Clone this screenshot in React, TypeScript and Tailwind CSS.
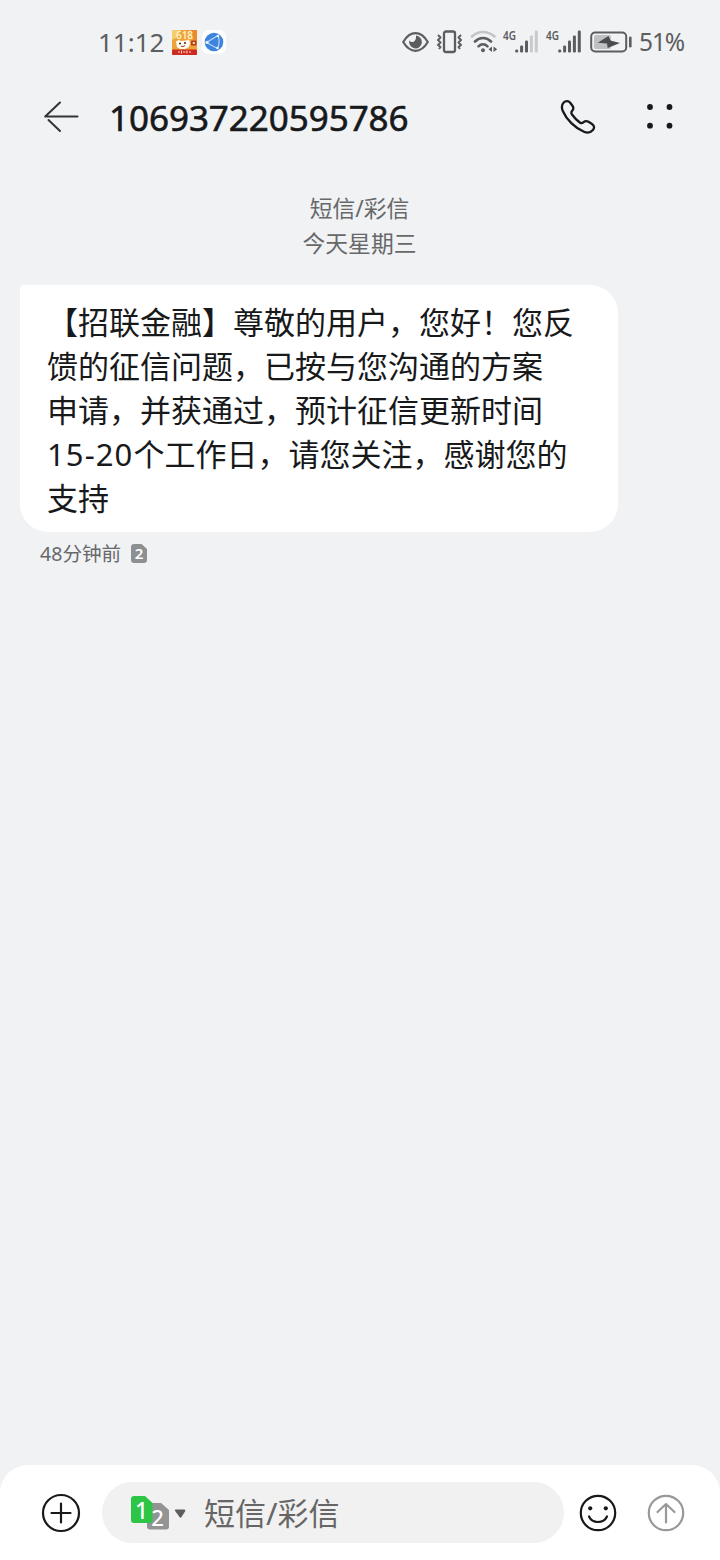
import type { ReactNode } from "react";

type Message = {
  id: number;
  lines: string[];
  time: string;
  sim: string;
};

const MESSAGES: Message[] = [
  {
    id: 1,
    lines: [
      "【招联金融】尊敬的用户，您好！您反",
      "馈的征信问题，已按与您沟通的方案",
      "申请，并获通过，预计征信更新时间",
      "15-20个工作日，请您关注，感谢您的",
      "支持",
    ],
    time: "48分钟前",
    sim: "2",
  },
];

const FONT = "font-['Noto_Sans','Noto_Sans_CJK_SC',sans-serif]";
const CONDENSED = "font-['Noto_Sans','Liberation_Sans',sans-serif]";

function SaleAppIcon() {
  return (
    <svg width="25" height="33" viewBox="0 -4 25 33">
      <rect width="25" height="25" rx="1" fill="#eda33a" />
      <path d="M0 0H9L4 8L0 10Z" fill="#f5cd6d" />
      <path d="M19 0H25V12L21 9Z" fill="#e98b2e" />
      <text
        x="12.500"
        y="9"
        textAnchor="middle"
        fontSize="10"
        fontWeight="600"
        fill="#fff3c4"
        className={CONDENSED}
      >
        618
      </text>
      <path
        d="M4 11.500L6.500 10L9 11L14 10.500L17 9.500L18 13L17 17L13 19H8L5 17Z"
        fill="#fffdf5"
      />
      <circle cx="8" cy="13.500" r="1" fill="#4a2413" />
      <circle cx="13" cy="13" r="1" fill="#4a2413" />
      <path d="M9 16Q11 17.500 13 15.500" stroke="#a3301c" fill="none" />
      <rect x="19" y="10.500" width="5.500" height="5" rx="1" fill="#b43a1b" />
      <rect x="20.800" y="12" width="2" height="2" fill="#ffe7a8" />
      <rect y="19.500" width="25" height="5.500" rx="1" fill="#cf2a22" />
      <path d="M6 22H8M9.500 20.500V23.500M11 22H13.500M15 20.500V23.500M17 22H19" stroke="#ffd9c2" />
    </svg>
  );
}

function BrowserAppIcon() {
  return (
    <svg width="24" height="24" viewBox="0 0 24 24">
      <rect width="24" height="24" rx="7" fill="#fff" />
      <circle cx="12" cy="12" r="9.300" fill="#3d84df" />
      <path
        d="M4.500 12.500L16 5.500Q18.500 12 15.500 18.500L4.500 12.500"
        fill="none"
        stroke="#b9d6f7"
        strokeWidth="1.200"
      />
      <circle cx="5" cy="12.300" r="1.600" fill="#e8f2fd" />
      <circle cx="16" cy="6" r="1.300" fill="#e8f2fd" />
      <circle cx="15.500" cy="18" r="1.300" fill="#e8f2fd" />
    </svg>
  );
}

function EyeIcon() {
  return (
    <svg width="27" height="22" viewBox="0 0 27 22">
      <path
        d="M1.200 11Q6.500 2.200 13.500 2.200T25.800 11Q20.500 19.800 13.500 19.800T1.200 11Z"
        fill="none"
        stroke="#5c5d5f"
        strokeWidth="2.200"
        strokeLinejoin="round"
      />
      <path
        d="M14 4.600A6.400 6.400 0 1 1 7.300 9.500Q8.800 11.500 11.200 11Q14.500 9.500 14 4.600Z"
        fill="#5c5d5f"
      />
    </svg>
  );
}

function VibrateIcon() {
  return (
    <svg
      width="27"
      height="24"
      viewBox="0 0 27 24"
      fill="none"
      stroke="#5c5d5f"
      strokeWidth="2"
      strokeLinejoin="round"
    >
      <rect x="8" y="1.500" width="11" height="20.500" rx="2" strokeWidth="2.300" />
      <path d="M2 5L4.500 7.500L2 10L4.500 12.500L2 15L4.500 17L3 19" />
      <path d="M25 5L22.500 7.500L25 10L22.500 12.500L25 15L22.500 17L24 19" />
    </svg>
  );
}

function WifiIcon() {
  return (
    <svg width="28" height="24" viewBox="0 0 28 24" fill="none" strokeLinecap="round">
      <path d="M2 6.500Q7 2 13 2T24.500 6.500" stroke="#c3c4c6" strokeWidth="2.700" />
      <path d="M5 11.500Q8.500 8 13 8T21 11.500" stroke="#5c5d5f" strokeWidth="2.700" />
      <path d="M8.500 16.300Q10.500 14.300 13 14.300T17.500 16.300" stroke="#5c5d5f" strokeWidth="2.600" />
      <circle cx="13" cy="20.300" r="2" fill="#5c5d5f" />
      <path d="M22 16.500V22L18.500 19.200ZM23.500 16.500V22L27.200 19.200Z" fill="#5c5d5f" />
    </svg>
  );
}

function SignalIcon({ strength }: { strength: number }) {
  const bars = [3, 7, 12, 17, 22];
  return (
    <svg width="35" height="34" viewBox="0 -5 35 34">
      <text
        x="0"
        y="9.500"
        fontSize="13"
        fontWeight="600"
        fill="#5c5d5f"
        textLength="13"
        lengthAdjust="spacingAndGlyphs"
        className={CONDENSED}
      >
        4G
      </text>
      {bars.map((height, index) => (
        <rect
          key={height}
          x={12.2 + index * 4.9}
          y={22.5 - height}
          width="3"
          height={height}
          rx="1.200"
          fill={index < strength ? "#5c5d5f" : "#c9cacc"}
        />
      ))}
    </svg>
  );
}

function BatteryIcon() {
  return (
    <svg width="42" height="24" viewBox="0 0 42 24">
      <rect x="4" y="5" width="17" height="14" rx="2" fill="#bfc0c2" />
      <rect x="1.200" y="2.500" width="35" height="19" rx="4" fill="none" stroke="#5c5d5f" strokeWidth="2" />
      <path d="M7.700 12.800L18.500 6L20.500 10.500L30 13L17.700 18L17 13.500Z" fill="#4b4c4e" />
      <rect x="39" y="6.500" width="2.600" height="11" rx="1.300" fill="#5c5d5f" />
    </svg>
  );
}

function StatusBar() {
  return (
    <div className="flex h-[84px] items-center pr-[35px] pl-[98px] text-[#5c5d5f]">
      <span className="w-[74px] text-[26px] leading-none">11:12</span>
      <div className="flex items-center gap-[5px]">
        <SaleAppIcon />
        <BrowserAppIcon />
      </div>
      <div className="ml-auto flex items-center">
        <EyeIcon />
        <span className="ml-[7px]">
          <VibrateIcon />
        </span>
        <span className="ml-[7px]">
          <WifiIcon />
        </span>
        <span className="ml-[5px]">
          <SignalIcon strength={3} />
        </span>
        <span className="ml-2">
          <SignalIcon strength={5} />
        </span>
        <span className="ml-[9px]">
          <BatteryIcon />
        </span>
        <span className="ml-[7px] w-[46px] pt-px text-[24.500px] leading-none tracking-[-1.1px]">51%</span>
      </div>
    </div>
  );
}

function IconButton({ label, children }: { label: string; children: ReactNode }) {
  return (
    <button type="button" aria-label={label} className="shrink-0">
      {children}
    </button>
  );
}

function Header() {
  return (
    <header className="flex h-[66px] items-center pr-[46px] pl-[43px] text-[#18191b]">
      <IconButton label="返回">
        <svg width="36" height="36" viewBox="0 0 36 36" fill="none" stroke="#333436" strokeWidth="2" strokeLinecap="round">
          <path d="M17 3.500L2.200 17.500H34.500M5.500 21L17 32" strokeLinejoin="round" />
        </svg>
      </IconButton>
      <h1 className="ml-[30px] text-[35px] leading-none font-normal tracking-[-0.05px] [-webkit-text-stroke:0.6px_#18191b]">
        106937220595786
      </h1>
      <div className="ml-auto flex items-center gap-[48px]">
        <IconButton label="拨打电话">
          <svg width="36" height="36" viewBox="0 0 36 36" fill="none" stroke="#18191b" strokeWidth="2.300" strokeLinejoin="round">
            <path d="M3.500 3.800C5.500 1.500 8.500 1.600 10.200 3.800L12.600 7C13.800 8.800 13.500 10.300 12.200 11.800C10.900 13.300 11 14 12 15.500C14.300 18.700 16.800 21.300 19.800 23.500C21.200 24.500 22 24.500 23.300 23.300C25 21.900 26.800 21.800 28.500 22.800L32 25C34.400 26.600 34.700 29 32.900 31C30.800 33.400 27.500 34.300 24 32.800C14.800 29 6.500 20.500 2.800 12C1.500 8.900 1.500 6 3.500 3.800Z" />
          </svg>
        </IconButton>
        <IconButton label="更多">
          <svg width="30" height="30" viewBox="0 0 30 30" fill="#18191b">
            <circle cx="6" cy="5" r="2.900" />
            <circle cx="25.500" cy="5" r="2.900" />
            <circle cx="6" cy="23.700" r="2.900" />
            <circle cx="25.500" cy="23.700" r="2.900" />
          </svg>
        </IconButton>
      </div>
    </header>
  );
}

function MessageBubble({ message }: { message: Message }) {
  return (
    <article className="pl-5">
      <div className="h-[247px] w-[598px] rounded-[28px] rounded-tl-[4px] bg-white pt-[15px] pl-[27px]">
        {message.lines.map((line) => {
          const digits = line.match(/^[\d-]+/)?.[0] ?? "";
          return (
            <p key={line} className="h-11 text-[31px] leading-[44px] whitespace-nowrap text-[#18191b]">
              {digits && <span className="tracking-[1.1px]">{digits}</span>}
              {line.slice(digits.length)}
            </p>
          );
        })}
      </div>
      <div className="mt-2 flex h-7 items-center gap-[10px] pl-5 text-[#67686a]">
        <span className="text-[19.600px] leading-7">{message.time}</span>
        <svg width="16" height="19" viewBox="0 0 16 19" className="-mt-px">
          <path d="M3 0H10.500L16 5V16A3 3 0 0 1 13 19H3A3 3 0 0 1 0 16V3A3 3 0 0 1 3 0Z" fill="#8e8f91" />
          <text x="8" y="15" textAnchor="middle" fontSize="15" fontWeight="600" fill="#fff" className={CONDENSED}>
            {message.sim}
          </text>
        </svg>
      </div>
    </article>
  );
}

function SimPicker() {
  return (
    <svg width="56" height="36" viewBox="0 0 56 36" className={CONDENSED}>
      <path d="M19 8H30L38 15V31.500A3 3 0 0 1 35 34.500H19A3 3 0 0 1 16 31.500V11A3 3 0 0 1 19 8Z" fill="#949494" />
      <path d="M3 1H14L21.500 8V25A3 3 0 0 1 18.500 28H3A3 3 0 0 1 0 25V4A3 3 0 0 1 3 1Z" fill="#2cc546" />
      <text x="10.500" y="23.500" textAnchor="middle" fontSize="23" fontWeight="500" fill="#fff">
        1
      </text>
      <text x="26.500" y="30.500" textAnchor="middle" fontSize="22" fontWeight="500" fill="#fff">
        2
      </text>
      <path d="M44.500 14.500H53.500Q55 15 54 16.500L50.500 22Q49.500 23.500 48.500 22L44.500 16.500Q43 15 44.500 14.500Z" fill="#5d5d5d" />
    </svg>
  );
}

function Composer() {
  return (
    <footer className="flex h-[95px] items-center rounded-t-[28px] bg-white pl-[41px]">
      <IconButton label="添加">
        <svg width="40" height="40" viewBox="0 0 40 40" fill="none" stroke="#18191b" strokeWidth="2.200" strokeLinecap="round">
          <circle cx="20" cy="20" r="18" />
          <path d="M20 10.500V29.500M10.500 20H29.500" />
        </svg>
      </IconButton>
      <div className="ml-[21px] flex h-[61px] w-[462px] items-center rounded-full bg-[#f1f1f1] pl-[29px]">
        <SimPicker />
        <span className="ml-[17px] pt-px text-[31px] leading-none text-[#666]">短信/彩信</span>
      </div>
      <div className="ml-[15px] flex items-center gap-[30px]">
        <IconButton label="表情">
          <svg width="38" height="38" viewBox="0 0 38 38" fill="none" stroke="#18191b" strokeWidth="2.200" strokeLinecap="round">
            <circle cx="19" cy="19" r="17.200" />
            <path d="M10 22.500Q12.500 28 19 28T28 22.500" />
            <circle cx="11.200" cy="14.300" r="2.100" fill="#18191b" stroke="none" />
            <circle cx="26.800" cy="14.300" r="2.100" fill="#18191b" stroke="none" />
          </svg>
        </IconButton>
        <IconButton label="发送">
          <svg width="38" height="38" viewBox="0 0 38 38" fill="none" stroke="#999" strokeWidth="2.200" strokeLinecap="round" strokeLinejoin="round">
            <circle cx="19" cy="19" r="17.200" />
            <path d="M19 28.500V10M10.500 18L19 10L27.500 18" />
          </svg>
        </IconButton>
      </div>
    </footer>
  );
}

export default function App() {
  return (
    <div className={`flex h-[1560px] w-[720px] flex-col bg-[#f1f2f4] ${FONT}`}>
      <StatusBar />
      <Header />
      <main className="flex-1">
        <div className="mt-[41px] mb-[24px] pr-px text-center text-[22.800px] leading-[35px] text-[#67686a]">
          <p>短信/彩信</p>
          <p>今天星期三</p>
        </div>
        {MESSAGES.map((message) => (
          <MessageBubble key={message.id} message={message} />
        ))}
      </main>
      <Composer />
    </div>
  );
}
